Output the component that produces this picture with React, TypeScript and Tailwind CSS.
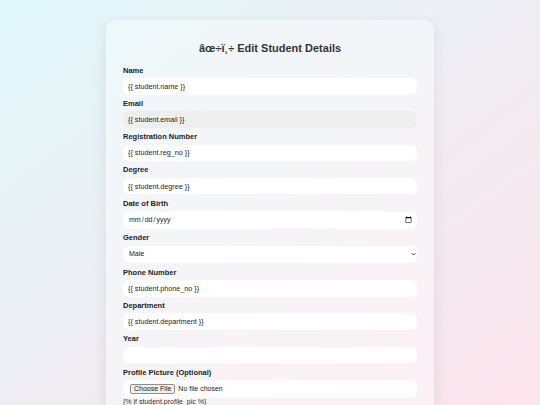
export default function App() {
  const fields: { label: string; value: string; readOnly?: boolean }[] = [
    { label: "Name", value: "{{ student.name }}" },
    { label: "Email", value: "{{ student.email }}", readOnly: true },
    { label: "Registration Number", value: "{{ student.reg_no }}" },
    { label: "Degree", value: "{{ student.degree }}" },
  ];
  const fields2 = [
    { label: "Phone Number", value: "{{ student.phone_no }}" },
    { label: "Department", value: "{{ student.department }}" },
    { label: "Year", value: "" },
  ];

  const labelCls = "block text-[7.5px] leading-[10px] font-bold text-[#222] mb-[2.5px]";
  const inputCls =
    "block w-full h-[16.5px] px-[5px] rounded-[6px] bg-white text-[7.2px] leading-[12px] text-[#222] outline-none";

  return (
    <div
      className="min-h-screen w-full bg-fixed bg-gradient-to-br from-[#e0f7fa] to-[#fce4ec] pt-[20px] pb-[20px]"
      style={{ fontFamily: '"Liberation Sans", Arial, sans-serif' }}
    >
      <div className="mx-auto w-[328px] rounded-[10px] bg-white/40 shadow-[0_4px_16px_rgba(0,0,0,0.08)] px-[17px] pt-[20px] pb-[20px]">
        <h2 className="text-center text-[11px] font-bold text-[#333] leading-[16px] mb-[9.5px]">
          âœ÷ï¸÷ Edit Student Details
        </h2>
        <form className="flex flex-col">
          {fields.map((f) => (
            <div key={f.label} className="mb-[4.3px]">
              <label className={labelCls}>{f.label}</label>
              <input
                type="text"
                defaultValue={f.value}
                readOnly={f.readOnly}
                className={
                  f.readOnly
                    ? "block w-full h-[16.5px] px-[5px] rounded-[6px] bg-[#eeeeee] text-[7.2px] leading-[12px] text-[#222] outline-none"
                    : inputCls
                }
              />
            </div>
          ))}
          <div className="mb-[4.5px]">
            <label className={labelCls}>Date of Birth</label>
            <input
              type="date"
              className="block w-full h-[17.5px] pl-[5px] pr-[3px] rounded-[6px] bg-white text-[7px] leading-[12px] text-[#222] outline-none"
            />
          </div>
          <div className="mb-[4.5px]">
            <label className={labelCls}>Gender</label>
            <div className="relative">
              <select className="block w-full h-[17.5px] px-[6px] rounded-[6px] bg-white text-[7px] text-[#222] outline-none appearance-none">
                <option>Male</option>
                <option>Female</option>
                <option>Other</option>
              </select>
              <svg
                viewBox="0 0 10 10"
                className="absolute right-[1px] top-1/2 -translate-y-1/2 w-[5px] h-[5px] pointer-events-none"
              >
                <path d="M1.5 3.5 L5 7 L8.5 3.5" fill="none" stroke="#333" strokeWidth="2" />
              </svg>
            </div>
          </div>
          {fields2.map((f) => (
            <div key={f.label} className="mb-[4.3px]">
              <label className={labelCls}>{f.label}</label>
              <input type="text" defaultValue={f.value} className={inputCls} />
            </div>
          ))}
          <div>
            <label className={labelCls}>Profile Picture (Optional)</label>
            <input
              type="file"
              className="block w-full h-[18px] px-[7px] py-[4px] rounded-[6px] bg-white text-[7px] leading-[10px] text-[#222] file:text-[7px] file:leading-[8px] file:border file:border-solid file:border-[#8f8f8f] file:bg-[#efefef] file:rounded-[2px] file:px-[3px] file:py-0 file:mr-[3px] file:text-[#222]"
            />
            <p className="text-[7px] leading-[8px] mt-[0px] text-[#333]">{"{% if student.profile_pic %}"}</p>
          </div>
        </form>
      </div>
    </div>
  );
}
